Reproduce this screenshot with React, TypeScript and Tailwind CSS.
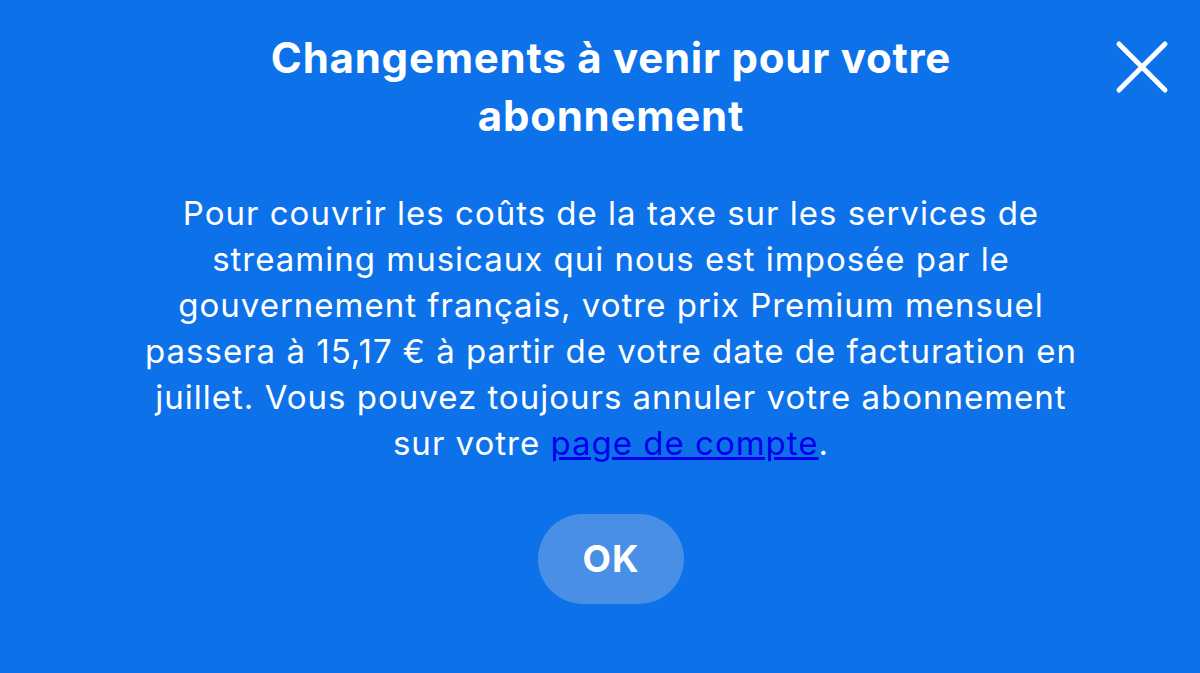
const App = () => {
  return (
    <div className="relative flex h-[673px] w-full flex-col items-center overflow-hidden bg-[#0d72ea] pl-[22px] font-['Inter',sans-serif] text-white">
      {/* Close */}
      <button className="absolute right-[31px] top-[40px] h-[54px] w-[54px]" aria-label="Fermer">
        <svg viewBox="0 0 54 54" className="h-full w-full" fill="none" stroke="white" strokeWidth="5" strokeLinecap="round">
          <path d="M4 4 L50 50 M50 4 L4 50" />
        </svg>
      </button>

      {/* Title */}
      <h1 className="mt-[29px] text-center text-[42px] font-bold leading-[58px] tracking-[0.75px]">
        Changements à venir pour votre
        <br />
        abonnement
      </h1>

      {/* Body */}
      <p className="mt-[45px] text-center text-[33px] leading-[46px] tracking-[1px]">
        Pour couvrir les coûts de la taxe sur les services de
        <br />
        streaming musicaux qui nous est imposée par le
        <br />
        gouvernement français, votre prix Premium mensuel
        <br />
        passera à 15,17 € à partir de votre date de facturation en
        <br />
        juillet. Vous pouvez toujours annuler votre abonnement
        <br />
        sur votre{' '}
        <a href="#" className="text-[#0000ee] underline">
          page de compte
        </a>
        .
      </p>

      {/* OK */}
      <button className="mt-[48px] h-[90px] w-[146px] rounded-full bg-[#4a8fe6] text-[37px] font-bold tracking-[1px] text-white">
        OK
      </button>
    </div>
  )
}

export default App
